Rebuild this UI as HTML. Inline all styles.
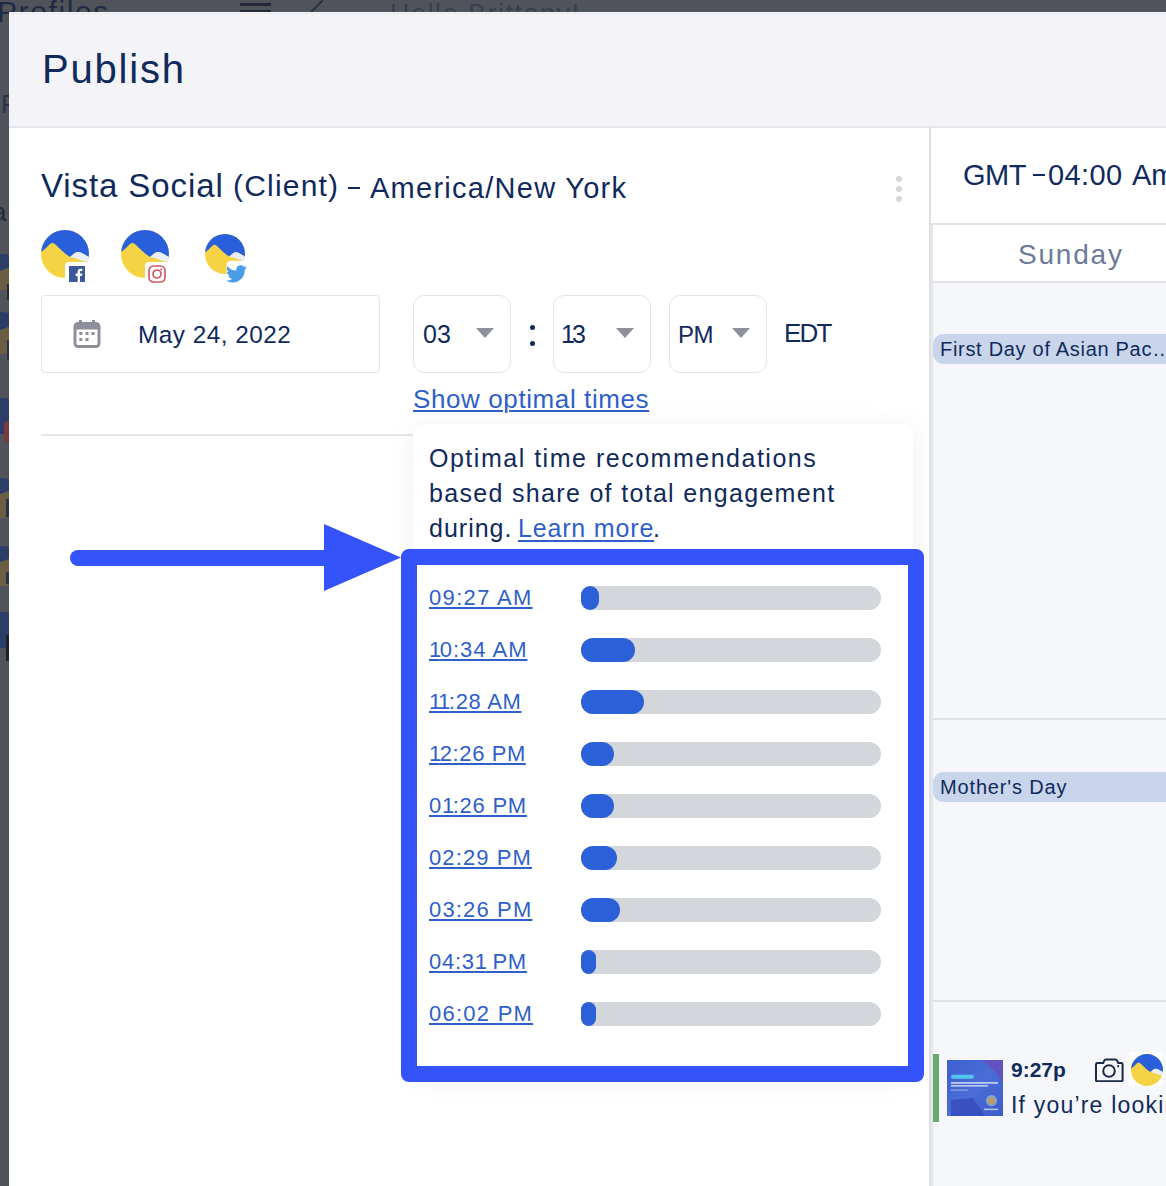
<!DOCTYPE html>
<html><head><meta charset="utf-8">
<style>
*{margin:0;padding:0;box-sizing:border-box}
html,body{width:1166px;height:1186px;overflow:hidden;background:#51535b;font-family:"Liberation Sans",sans-serif;color:#102a5c}
.a{position:absolute;white-space:nowrap;line-height:1}
#modal{position:absolute;left:9px;top:12px;width:1157px;height:1174px;background:#fff;overflow:hidden}
#hdr{position:absolute;left:0;top:0;width:1157px;height:116px;background:#f3f3f8;border-bottom:2px solid #e6e6ec}
.box{position:absolute;border:1.5px solid #e3e4e9;background:#fff}
.sel{position:absolute;top:283px;width:98px;height:78px;border:1.5px solid #e3e4e9;border-radius:11px;background:#fff}
.tri{position:absolute;width:0;height:0;border-left:9px solid transparent;border-right:9px solid transparent;border-top:10px solid #8e8f9c}
.lnk{color:#2f5fc8;text-decoration:underline;text-decoration-thickness:1.6px;text-underline-offset:3px}
.bar{position:absolute;left:572px;width:300px;height:24px;border-radius:12px;background:#d3d6db}
.fill{position:absolute;left:0;top:0;height:24px;border-radius:12px;background:#2b60d8}
.tm{position:absolute;left:420px;font-size:22px;line-height:1;text-underline-offset:2px}
.n1{letter-spacing:-1.5px}
</style></head><body>
<!-- background app (dimmed) -->
<div class="a" style="left:-3px;top:-3px;font-size:30px;color:#1f2b44;letter-spacing:1.6px">Profiles</div>
<div class="a" style="left:240px;top:3px;width:31px;height:3px;background:#23293a"></div>
<div class="a" style="left:390px;top:1px;font-size:27px;color:#3a3f50;letter-spacing:1.5px">Hello Brittany!</div><div class="a" style="left:240px;top:10px;width:31px;height:3px;background:#23293a"></div><div class="a" style="left:316px;top:-2px;width:2px;height:16px;background:#2a3040;transform:rotate(45deg)"></div>

<div class="a" style="left:1px;top:91px;font-size:26px;color:#28324e">P</div>
<div class="a" style="left:-8px;top:199px;font-size:26px;color:#262b38">a</div>
<div class="a" style="left:-14px;top:254px;width:34px;height:36px;border-radius:50%;background:linear-gradient(160deg,#2d3d6a 0%,#2d3d6a 45%,#6a5f42 46%,#6a5f42 100%)"></div>
<div class="a" style="left:7px;top:284px;width:3px;height:16px;background:#252a36"></div>
<div class="a" style="left:-14px;top:312px;width:34px;height:42px;border-radius:50%;background:linear-gradient(160deg,#2d3d6a 0%,#2d3d6a 42%,#6a5f42 43%,#6a5f42 100%)"></div>
<div class="a" style="left:7px;top:340px;width:3px;height:20px;background:#2a3142"></div>
<div class="a" style="left:-14px;top:398px;width:34px;height:36px;border-radius:50%;background:#2d3d6a"></div>
<div class="a" style="left:4px;top:421px;width:8px;height:22px;border-radius:4px;background:#7a3b3e"></div>
<div class="a" style="left:-14px;top:478px;width:34px;height:40px;border-radius:50%;background:linear-gradient(160deg,#2d3d6a 0%,#2d3d6a 40%,#6a5f42 41%,#6a5f42 100%)"></div>
<div class="a" style="left:6px;top:499px;width:4px;height:18px;background:#2a3142"></div>
<div class="a" style="left:-14px;top:546px;width:34px;height:40px;border-radius:50%;background:linear-gradient(160deg,#2d3d6a 0%,#2d3d6a 40%,#6a5f42 41%,#6a5f42 100%)"></div>
<div class="a" style="left:6px;top:572px;width:4px;height:12px;background:#2a3142"></div>
<div class="a" style="left:-14px;top:612px;width:34px;height:36px;border-radius:50%;background:#2d3d6a"></div>
<div class="a" style="left:6px;top:635px;width:4px;height:26px;background:#1e212b"></div>
<div id="modal">
  <div id="hdr">
    <div class="a" style="left:0;top:1px;width:1157px;height:1px;background:#e9e9ef"></div>
    <div class="a" style="left:33px;top:37px;font-size:40px;letter-spacing:1.8px">Publish</div>
  </div>

  <!-- left panel -->
  <div class="a" style="left:32px;top:157px;font-size:33px;letter-spacing:0.9px">Vista Social</div>
  <div class="a" style="left:224px;top:159px;font-size:30px;letter-spacing:1.2px">(Client)</div>
  <div class="a" style="left:339px;top:174.5px;width:11.5px;height:2.7px;background:#102a5c"></div>
  <div class="a" style="left:361px;top:162px;font-size:29px;letter-spacing:1.27px">America/New York</div>
  <div class="a" style="left:887px;top:164px;width:6px;height:6px;border-radius:3px;background:#d5d6dc"></div>
  <div class="a" style="left:887px;top:174px;width:6px;height:6px;border-radius:3px;background:#d5d6dc"></div>
  <div class="a" style="left:887px;top:184px;width:6px;height:6px;border-radius:3px;background:#d5d6dc"></div>

  <!-- avatars -->
  <svg class="a" style="left:32px;top:218px" width="48" height="48" viewBox="0 0 48 48">
    <defs><clipPath id="c1"><circle cx="24" cy="24" r="24"/></clipPath></defs>
    <g clip-path="url(#c1)">
      <rect width="48" height="48" fill="#f6d344"/>
      <path d="M0 0H48V27C44 25 40 22 37 22C34 22 32 25 29 27C24 24 18 18 15 15C13 13 11 12 9 14C6 17 3 20 0 22Z" fill="#2a5fdb"/>
      <path d="M29 27C32 25 34 22 37 22C40 22 44 25 48 27V33C42 31 35 28 29 27Z" fill="#e8eef8"/>
    </g>
    <rect x="24" y="32" width="24" height="24" rx="4" fill="#fff"/>
  </svg>
  <svg class="a" style="left:60px;top:254px" width="16" height="16" viewBox="0 0 16 16"><rect width="16" height="16" fill="#3b5998"/><path d="M11 16V10H13L13.3 7.6H11V6.2C11 5.5 11.2 5 12.2 5H13.4V2.9C13.2 2.9 12.5 2.8 11.6 2.8C9.8 2.8 8.6 3.9 8.6 5.9V7.6H6.6V10H8.6V16Z" fill="#fff"/></svg>

  <svg class="a" style="left:112px;top:218px" width="48" height="48" viewBox="0 0 48 48">
    <defs><clipPath id="c2"><circle cx="24" cy="24" r="24"/></clipPath></defs>
    <g clip-path="url(#c2)">
      <rect width="48" height="48" fill="#f6d344"/>
      <path d="M0 0H48V27C44 25 40 22 37 22C34 22 32 25 29 27C24 24 18 18 15 15C13 13 11 12 9 14C6 17 3 20 0 22Z" fill="#2a5fdb"/>
      <path d="M29 27C32 25 34 22 37 22C40 22 44 25 48 27V33C42 31 35 28 29 27Z" fill="#e8eef8"/>
    </g>
    <rect x="24" y="32" width="24" height="24" rx="4" fill="#fff"/>
  </svg>
  <svg class="a" style="left:139px;top:253px" width="18" height="18" viewBox="0 0 18 18"><rect x="1" y="1" width="16" height="16" rx="4.5" fill="none" stroke="#d05a62" stroke-width="1.7"/><circle cx="9" cy="9" r="4" fill="none" stroke="#d05a62" stroke-width="1.7"/><circle cx="13.3" cy="4.5" r="1" fill="#cf5560"/></svg>

  <svg class="a" style="left:196px;top:222px" width="40" height="40" viewBox="0 0 48 48">
    <defs><clipPath id="c3"><circle cx="24" cy="24" r="24"/></clipPath></defs>
    <g clip-path="url(#c3)">
      <rect width="48" height="48" fill="#f6d344"/>
      <path d="M0 0H48V27C44 25 40 22 37 22C34 22 32 25 29 27C24 24 18 18 15 15C13 13 11 12 9 14C6 17 3 20 0 22Z" fill="#2a5fdb"/>
      <path d="M29 27C32 25 34 22 37 22C40 22 44 25 48 27V33C42 31 35 28 29 27Z" fill="#e8eef8"/>
    </g>
    <rect x="26" y="32" width="26" height="26" rx="5" fill="#fff"/>
  </svg>
  <svg class="a" style="left:217px;top:253px" width="21" height="18" viewBox="0 0 24 20"><path d="M24 2.4c-.9.4-1.8.6-2.8.8 1-.6 1.8-1.6 2.2-2.7-1 .6-2 1-3.1 1.2C19.3.7 18 .1 16.6.1c-2.7 0-4.9 2.2-4.9 4.9 0 .4 0 .8.1 1.1C7.7 5.9 4.1 4 1.7 1 1.2 1.8 1 2.6 1 3.5c0 1.7.9 3.2 2.2 4.1-.8 0-1.6-.2-2.2-.6v.1c0 2.4 1.7 4.4 3.9 4.8-.4.1-.8.2-1.3.2-.3 0-.6 0-.9-.1.6 2 2.4 3.4 4.6 3.4-1.7 1.3-3.8 2.1-6.1 2.1-.4 0-.8 0-1.2-.1 2.2 1.4 4.8 2.2 7.5 2.2 9.1 0 14-7.5 14-14v-.6c1-.7 1.8-1.6 2.5-2.6z" fill="#4a9de8"/></svg>

  <!-- date box -->
  <div class="box" style="left:32px;top:283px;width:339px;height:78px;border-radius:4px"></div>
  <svg class="a" style="left:63px;top:307px" width="30" height="30" viewBox="0 0 30 30">
    <rect x="3" y="4.5" width="24" height="23" rx="3" fill="none" stroke="#8e8f9c" stroke-width="3"/>
    <rect x="3" y="4.5" width="24" height="6" fill="#8e8f9c"/>
    <rect x="7" y="1" width="3" height="5" fill="#8e8f9c"/><rect x="20" y="1" width="3" height="5" fill="#8e8f9c"/>
    <rect x="7.3" y="13" width="3" height="3" fill="#8e8f9c"/><rect x="13.5" y="13" width="3" height="3" fill="#8e8f9c"/><rect x="19.5" y="13" width="3" height="3" fill="#8e8f9c"/>
    <rect x="7.3" y="19" width="3" height="3" fill="#8e8f9c"/><rect x="13.5" y="19" width="3" height="3" fill="#8e8f9c"/>
  </svg>
  <div class="a" style="left:129px;top:311px;font-size:24.3px;letter-spacing:0.5px">May 24, 2022</div>

  <!-- selects -->
  <div class="sel" style="left:404px"></div>
  <div class="a" style="left:414px;top:310px;font-size:25px;letter-spacing:0px">03</div>
  <div class="tri" style="left:467px;top:316px"></div>
  <div class="a" style="left:521px;top:313px;width:5px;height:5px;border-radius:50%;background:#102a5c"></div><div class="a" style="left:521px;top:329px;width:5px;height:5px;border-radius:50%;background:#102a5c"></div>
  <div class="sel" style="left:544px"></div>
  <div class="a" style="left:552px;top:310px;font-size:25px;letter-spacing:-3px">13</div>
  <div class="tri" style="left:607px;top:316px"></div>
  <div class="sel" style="left:660px"></div>
  <div class="a" style="left:669px;top:311px;font-size:24px;letter-spacing:-0.6px">PM</div>
  <div class="tri" style="left:723px;top:316px"></div>
  <div class="a" style="left:775px;top:308px;font-size:26px;letter-spacing:-1.8px">EDT</div>

  <div class="a lnk" style="left:404px;top:374px;font-size:26px;letter-spacing:0.6px;text-underline-offset:2px;text-decoration-thickness:1.5px">Show optimal times</div>
  <div class="a" style="left:32px;top:422px;width:400px;height:2px;background:#e6e6ea"></div>

  <!-- popup -->
  <div class="a" style="left:404px;top:412px;width:500px;height:651px;background:#fff;border-radius:12px;box-shadow:0 3px 28px rgba(0,0,0,0.07)"></div>
  <div class="a" style="left:420px;top:434px;font-size:25px;letter-spacing:1.51px">Optimal time recommendations</div>
  <div class="a" style="left:420px;top:469px;font-size:25px;letter-spacing:1.32px">based share of total engagement</div>
  <div class="a" style="left:420px;top:504px;font-size:25px;letter-spacing:1.0px">during.</div>
  <div class="a lnk" style="left:509px;top:504px;font-size:25px;letter-spacing:0.83px">Learn more</div>
  <div class="a" style="left:644px;top:504px;font-size:25px">.</div>

  <!-- rows -->

  <div class="tm lnk" style="top:575px;letter-spacing:1.33px">09:27 AM</div><div class="bar" style="top:574px"><div class="fill" style="width:18px"></div></div>
  <div class="tm lnk" style="top:627px;letter-spacing:1.00px"><span class="n1">1</span>0:34 AM</div><div class="bar" style="top:626px"><div class="fill" style="width:54px"></div></div>
  <div class="tm lnk" style="top:679px;letter-spacing:0.70px"><span class="n1">1</span><span class="n1">1</span>:28 AM</div><div class="bar" style="top:678px"><div class="fill" style="width:63px"></div></div>
  <div class="tm lnk" style="top:731px;letter-spacing:0.60px"><span class="n1">1</span>2:26 PM</div><div class="bar" style="top:730px"><div class="fill" style="width:33px"></div></div>
  <div class="tm lnk" style="top:783px;letter-spacing:0.75px">0<span class="n1">1</span>:26 PM</div><div class="bar" style="top:782px"><div class="fill" style="width:33px"></div></div>
  <div class="tm lnk" style="top:835px;letter-spacing:1.10px">02:29 PM</div><div class="bar" style="top:834px"><div class="fill" style="width:36px"></div></div>
  <div class="tm lnk" style="top:887px;letter-spacing:1.15px">03:26 PM</div><div class="bar" style="top:886px"><div class="fill" style="width:39px"></div></div>
  <div class="tm lnk" style="top:939px;letter-spacing:0.75px">04:3<span class="n1">1</span> PM</div><div class="bar" style="top:938px"><div class="fill" style="width:15px"></div></div>
  <div class="tm lnk" style="top:991px;letter-spacing:1.25px">06:02 PM</div><div class="bar" style="top:990px"><div class="fill" style="width:15px"></div></div>
  <!-- highlight box + arrow -->
  <div class="a" style="left:392px;top:537px;width:523px;height:533px;border:16px solid #3453fb;border-radius:8px"></div>
  <svg class="a" style="left:0;top:500px" width="420" height="100" viewBox="0 0 420 100">
    <line x1="69" y1="46" x2="330" y2="46" stroke="#3453fb" stroke-width="16" stroke-linecap="round"/>
    <path d="M315 12L392 45.5L315 79Z" fill="#3453fb"/>
  </svg>

  <!-- right calendar -->
  <div class="a" style="left:920px;top:115px;width:2px;height:1100px;background:#e0e1e5"></div>
  <div class="a" style="left:922px;top:211px;width:300px;height:1000px;background:#f5f7fb;border-left:2px solid #e6e7eb"></div>
  <div class="a" style="left:922px;top:116px;width:300px;height:97px;background:#fff;border-bottom:2px solid #e2e3e7"></div>
  <div class="a" style="left:954px;top:149px;font-size:29px;letter-spacing:-0.5px">GMT</div>
  <div class="a" style="left:1024px;top:162.3px;width:12px;height:2.2px;background:#102a5c"></div>
  <div class="a" style="left:1039px;top:149px;font-size:29px;letter-spacing:0.4px">04:00</div>
  <div class="a" style="left:1123px;top:149px;font-size:29px">America/New York</div>
  <div class="a" style="left:924px;top:213px;width:300px;height:57.5px;background:#fff;border-bottom:2px solid #e2e3e7"></div>
  <div class="a" style="left:1009px;top:229px;font-size:28px;color:#6b7b98;letter-spacing:1.8px">Sunday</div>
  <div class="a" style="left:924px;top:322px;width:260px;height:30px;background:#c8d5ea;border-radius:10px"></div>
  <div class="a" style="left:931px;top:327px;font-size:20px;letter-spacing:0.7px">First Day of Asian Pac…</div>
  <div class="a" style="left:924px;top:706px;width:300px;height:2px;background:#e2e3e7"></div>
  <div class="a" style="left:924px;top:760px;width:260px;height:30px;background:#c8d5ea;border-radius:10px"></div>
  <div class="a" style="left:931px;top:765px;font-size:20px;letter-spacing:0.85px">Mother's Day</div>
  <div class="a" style="left:924px;top:988px;width:300px;height:2px;background:#e2e3e7"></div>
  <div class="a" style="left:924px;top:1042px;width:6px;height:68px;background:#6aaa6e"></div>
  <svg class="a" style="left:938px;top:1048px;filter:blur(0.35px)" width="56" height="56" viewBox="0 0 56 56">
    <defs><linearGradient id="tg" x1="0" y1="0" x2="1" y2="1"><stop offset="0" stop-color="#3d5fd0"/><stop offset="0.5" stop-color="#4a6dd6"/><stop offset="1" stop-color="#3f5ccc"/></linearGradient></defs>
    <rect width="56" height="56" fill="url(#tg)"/>
    <path d="M36 0H56V22L48 12Z" fill="#6a4cb8" opacity="0.75"/>
    <path d="M4 40L26 38L38 56H4Z" fill="#2d3db0" opacity="0.55"/>
    <rect x="4" y="14.7" width="23" height="4" rx="2" fill="#52c4ee"/>
    <rect x="4" y="22" width="47" height="1.8" fill="#d2dcf7" opacity="0.85"/>
    <rect x="4" y="25" width="37" height="1.6" fill="#d2dcf7" opacity="0.85"/>
    <rect x="4" y="29.5" width="17" height="1.3" fill="#8fa3e2"/>
    <circle cx="44.5" cy="40.6" r="5.6" fill="#7ba6e8"/><circle cx="44.5" cy="40.8" r="4" fill="#b59a72"/>
    <rect x="37" y="48.6" width="14" height="1.5" fill="#d2dcf7" opacity="0.8"/>
  </svg>
  <svg class="a" style="left:1085px;top:1046px" width="30" height="24" viewBox="0 0 30 24">
    <path d="M2 6.4Q2 5 3.4 5H9.2L10.4 2.4Q10.8 1.4 12 1.4H21.4Q22.6 1.4 23 2.4L24.2 5H27.2Q28.6 5 28.6 6.4V22.2Q28.6 23.2 27.4 23.2H3.2Q2 23.2 2 22.2Z" fill="none" stroke="#1d2a44" stroke-width="2"/>
    <circle cx="15" cy="13" r="5.8" fill="none" stroke="#1d2a44" stroke-width="2"/>
    <circle cx="24.2" cy="8.2" r="1.1" fill="#1d2a44"/>
  </svg>
  <div class="a" style="left:1120px;top:1040px;width:34px;height:34px;background:#fff"></div>
  <svg class="a" style="left:1122px;top:1042px" width="32" height="32" viewBox="0 0 48 48">
    <defs><clipPath id="c4"><circle cx="24" cy="24" r="24"/></clipPath></defs>
    <g clip-path="url(#c4)">
      <rect width="48" height="48" fill="#f6d344"/>
      <path d="M0 0H48V27C44 25 40 22 37 22C34 22 32 25 29 27C24 24 18 18 15 15C13 13 11 12 9 14C6 17 3 20 0 22Z" fill="#2a5fdb"/>
      <path d="M29 27C32 25 34 22 37 22C40 22 44 25 48 27V33C42 31 35 28 29 27Z" fill="#e8eef8"/>
    </g>
  </svg>
  <div class="a" style="left:1002px;top:1047px;font-size:21px;font-weight:bold">9:27p</div>
  <div class="a" style="left:1002px;top:1082px;font-size:23px;letter-spacing:1.2px">If you’re looking</div>
</div>
</body></html>
